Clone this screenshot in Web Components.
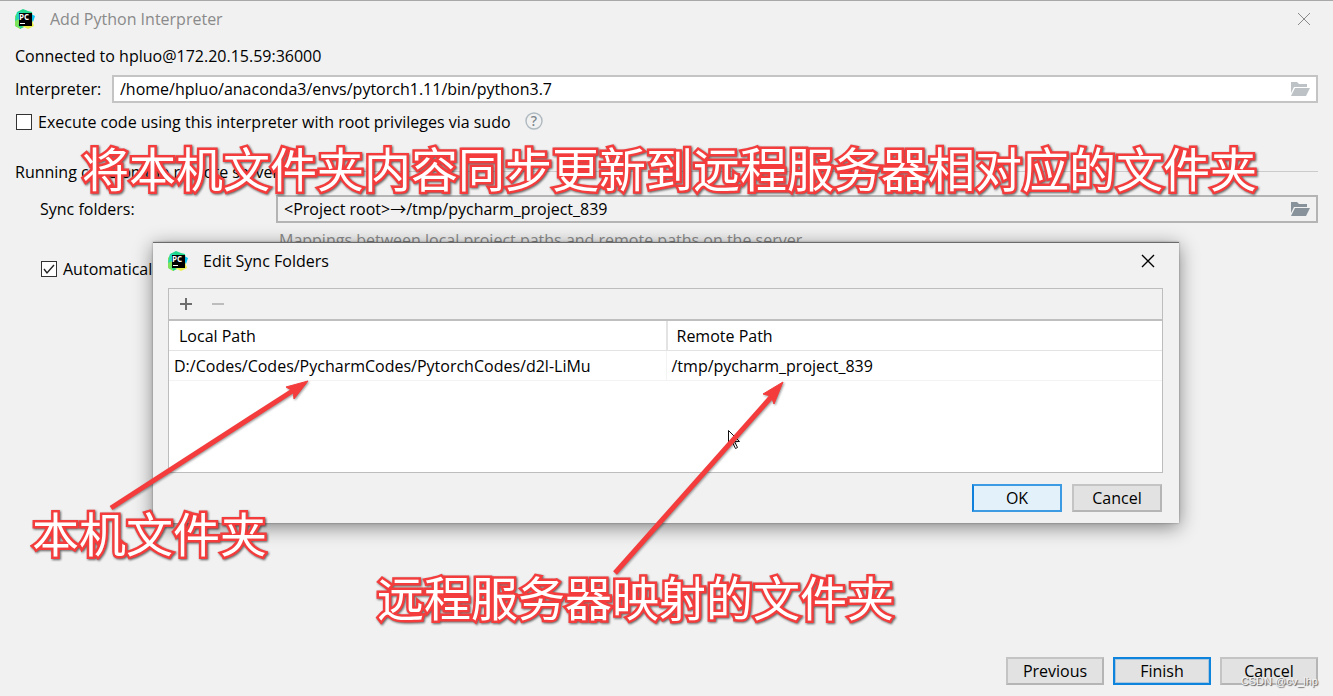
<!DOCTYPE html>
<html lang="en">
<head>
<meta charset="utf-8">
<title>Add Python Interpreter</title>
<style>
html, body { height: 100%; margin: 0; }
body { font: 16px/24px "Open Sans", "Noto Sans CJK SC", sans-serif; color: #000; background: #f1f1f1; overflow: hidden; }
</style>
</head>
<body>
<interpreter-page></interpreter-page>
<script>
function define(name, html, ready) {
  const template = document.createElement('template');
  template.innerHTML = html;
  customElements.define(name, class extends HTMLElement {
    connectedCallback() {
      if (this.shadowRoot) return;
      this.attachShadow({ mode: 'open' }).append(template.content.cloneNode(true));
      if (ready) ready(this, this.shadowRoot);
    }
  });
}

define('pycharm-logo', `
<style>:host { display: block; width: 20px; height: 20px; } svg { display: block; } text { font: 700 8px "Open Sans", sans-serif; }</style>
<svg width="20" height="20" viewBox="0 0 20 20" aria-hidden="true">
  <path d="M2 3 8 0l5 2 4 1 1 8-8 4-9 3z" fill="#21d789"/>
  <path d="M0 7 3 3l3 9 2 5-3 3-5-3z" fill="#7ee35a"/>
  <path d="M2 3h6L4 10 0 12z" fill="#25d9b0"/>
  <path d="M16 5l4 2-2 6-4-2z" fill="#07c3f2"/>
  <path d="M4 15l13-4 2 6-6 3-4-2-5 2z" fill="#e9f04a"/>
  <path d="M3 15l4 2 2 1-4 2z" fill="#21d789"/>
  <rect x="4" y="4" width="13" height="13" fill="#000"/>
  <text x="4" y="11" fill="#fff">PC</text>
  <path d="M5 14h5v1H5z" fill="#fff"/>
</svg>`);

define('title-bar', `
<style>
:host { display: flex; align-items: center; height: 36px; padding: 0 22px 0 15px; gap: 15px; }
:host([strong]) { padding-right: 24px; }
h1 { flex: 1; margin: 0; font: inherit; }
button { border: 0; padding: 0; background: none; color: inherit; width: 14px; height: 14px; }
svg { display: block; }
</style>
<pycharm-logo></pycharm-logo><h1><slot></slot></h1>
<button type="button" aria-label="Close"><svg width="14" height="14" viewBox="0 0 14 14" fill="none" stroke="currentColor"><path d="M1 1l12 12M13 1L1 13"/></svg></button>`,
(host, root) => {
  if (host.hasAttribute('strong')) root.querySelector('svg').setAttribute('stroke-width', '1.4');
});

define('push-button', `
<style>
:host { display: block; width: 98px; height: 28px; }
button { box-sizing: border-box; width: 100%; height: 100%; padding: 0; border: 2px solid #b5b5b5; border-top-color: #c4c4c4; border-left-color: #c4c4c4; background: #e2e2e2; font: inherit; line-height: 22px; color: #000; }
:host([primary]) button { border-color: #0f84dd; box-shadow: inset 0 0 0 1px #abc7de; }
:host([hot]) button { border-color: #3d9be3; border-left-color: #0f80dc; background: #e3f1fa; }
</style>
<button type="button"><slot></slot></button>`);

define('path-field', `
<style>
:host { display: flex; flex: 1; box-sizing: border-box; height: 28px; border: 2px solid #c4c4c4; background: #fff; color: #bcc2c6; align-items: center; padding-right: 6px; }
:host([dark]) { background: #f1f1f1; border-color: #b4b4b4; color: #87929a; }
input { flex: 1; min-width: 0; height: 24px; box-sizing: border-box; border: 0; outline: 0; padding: 0 6px; background: none; font: inherit; color: #000; }
button { border: 0; padding: 0; background: none; color: inherit; width: 20px; height: 16px; }
svg { display: block; }
</style>
<input id="path" type="text" spellcheck="false">
<button type="button" aria-label="Browse"><svg width="20" height="16" viewBox="0 0 20 16" fill="currentColor"><path d="M1 1h6l2 2h8v3H4L1 12z"/><path d="M5 7h15l-4 8H1z"/></svg></button>`,
(host, root) => {
  const input = root.querySelector('input');
  input.value = host.getAttribute('value');
  input.setAttribute('aria-label', host.getAttribute('label'));
});

define('check-option', `
<style>
:host { display: flex; align-items: center; }
label { display: flex; align-items: center; gap: 6px; white-space: nowrap; }
input { appearance: none; margin: 0; width: 16px; height: 16px; box-sizing: border-box; border: 1px solid #333; background: #fff; }
input:checked { background: #fff url("data:image/svg+xml,%3Csvg xmlns='http://www.w3.org/2000/svg' viewBox='0 0 14 14'%3E%3Cpath d='M2 7l3 4 7-8' fill='none' stroke='%23222' stroke-width='1.4'/%3E%3C/svg%3E"); }
</style>
<label><input type="checkbox"><slot></slot></label>`,
(host, root) => { root.querySelector('input').checked = host.hasAttribute('checked'); });

define('note-text', `
<style>
:host { position: absolute; font: 400 47px/60px "Noto Sans CJK SC", sans-serif; color: #fff; white-space: nowrap; -webkit-text-stroke: 5px #f43c3c; paint-order: stroke fill; stroke-linejoin: round; filter: drop-shadow(1px 1px 1px #0009); }
</style><slot></slot>`);

define('note-arrows', `
<style>:host { position: absolute; left: 0; top: 0; margin-top: -1px; pointer-events: none; } svg { display: block; }</style>
<svg width="900" height="600" viewBox="0 0 900 600" aria-hidden="true">
  <path d="M728.500 430.500v16l4-4 3 6 2-1-3-6h5z" fill="#fff" stroke="#111"/>
  <g fill="#f43c3c" stroke="#f43c3c" filter="drop-shadow(1px 1px 1px #0006)">
    <path d="M111 508L294 390M615 573L773 395" stroke-width="5"/>
    <path d="M308 381l-22 6 7 4 1 8z"/><path d="M783 382l-20 12 8 2 3 8z"/>
  </g>
</svg>`);

define('sync-table', `
<style>
:host { display: flex; flex-direction: column; border: 1px solid #bdbdbd; background: #fff; }
.tools { display: flex; align-items: center; gap: 18px; height: 30px; padding: 0 10px; background: #f1f1f1; border-bottom: 2px solid #bfbfbf; }
.tools button { border: 0; padding: 0; width: 14px; height: 14px; background: none; }
svg { display: block; }
table { width: 100%; border-collapse: separate; border-spacing: 0; table-layout: fixed; }
th, td { box-sizing: border-box; height: 30px; padding: 0 0 0 5px; text-align: left; font-weight: 400; line-height: 24px; border-bottom: 1px solid #f3f3f3; }
th { padding: 0 10px; border-bottom-color: #e3e3e3; }
th + th { border-left: 2px solid #e3e3e3; padding-left: 9px; }
td + td { border-left: 1px solid #f3f3f3; }
.space { height: 91px; }
</style>
<div class="tools">
  <button type="button" aria-label="Add"><svg width="14" height="14"><path d="M7 1v12M1 7h12" stroke="#6e6e6e" stroke-width="2"/></svg></button>
  <button type="button" aria-label="Remove"><svg width="14" height="14"><path d="M1 7h12" stroke="#bdbdbd" stroke-width="2"/></svg></button>
</div>
<table>
  <thead><tr><th scope="col">Local Path</th><th scope="col">Remote Path</th></tr></thead>
  <tbody><tr><td>D:/Codes/Codes/PycharmCodes/PytorchCodes/d2l-LiMu</td><td>/tmp/pycharm_project_839</td></tr></tbody>
</table>
<div class="space"></div>`);

define('sync-dialog', `
<style>
:host { position: absolute; left: 153px; right: 154px; top: 241px; background: #f1f1f1; border-top: 1px solid #6b6b6b; box-shadow: 0 4px 18px #0007, 0 0 2px #0005; }
sync-table { margin: 9px 16px 0 15px; }
footer { display: flex; justify-content: flex-end; gap: 10px; padding: 11px 17px 11px; }
push-button { width: 90px; }
</style>
<title-bar strong>Edit Sync Folders</title-bar>
<sync-table></sync-table>
<footer><push-button hot>OK</push-button><push-button>Cancel</push-button></footer>`);

define('interpreter-page', `
<style>
:host { position: relative; display: flex; flex-direction: column; box-sizing: border-box; min-height: 100%; border-top: 1px solid #a8a8a8; overflow: hidden; }
.title { color: #8a8a8a; }
.line { display: flex; align-items: center; padding: 0 15px; }
.connected { height: 38px; }
.path { height: 28px; }
.path label { width: 97px; }
.execute { height: 38px; gap: 14px; padding-left: 16px; }
.help { width: 18px; height: 18px; border: 0; padding: 0; background: none; }
.help svg { display: block; overflow: visible; }
.help text { font: 500 14px "Noto Sans", sans-serif; }
.section { height: 24px; padding-top: 19px; padding-bottom: 11px; gap: 6px; }
.section h2 { margin: 0; font: inherit; }
.section hr { flex: 1; margin: 0 0 2px; border: 0; border-top: 1px solid #cbcbcb; }
.sync { padding-left: 40px; }
.sync label { width: 236px; }
.hint { padding: 5px 0 5px 279px; color: #8a8a8a; }
.auto { padding-left: 41px; }
.actions { display: flex; justify-content: flex-end; gap: 9px; margin-top: auto; padding: 0 15px 11px; }
.credit { position: absolute; right: 15px; bottom: 7px; font: 11px/16px "Liberation Sans", sans-serif; color: #f5f5f5; text-shadow: 1px 1px 1px #555; }
.server { left: 82px; top: 136px; }
.local { left: 32px; top: 501px; }
.remote { left: 377px; top: 565px; }
</style>
<title-bar class="title">Add Python Interpreter</title-bar>
<div class="line connected">Connected to hpluo@172.20.15.59:36000</div>
<div class="line path"><label>Interpreter:</label><path-field label="Interpreter" value="/home/hpluo/anaconda3/envs/pytorch1.11/bin/python3.7"></path-field></div>
<div class="line execute"><check-option>Execute code using this interpreter with root privileges via sudo</check-option>
<button class="help" type="button" aria-label="Help"><svg width="18" height="18"><circle cx="9" cy="8" r="8" fill="none" stroke="#aeb9c0" stroke-width="1.4"/><text x="9" y="13" text-anchor="middle" fill="#7c858b">?</text></svg></button></div>
<div class="line section"><h2>Running code on the remote server</h2><hr></div>
<div class="line sync"><label>Sync folders:</label><path-field dark label="Sync folders" value="&lt;Project root&gt;→/tmp/pycharm_project_839"></path-field></div>
<div class="hint">Mappings between local project paths and remote paths on the server</div>
<check-option class="auto" checked>Automatically</check-option>
<div class="actions"><push-button>Previous</push-button><push-button primary>Finish</push-button><push-button>Cancel</push-button></div>
<sync-dialog></sync-dialog>
<note-arrows></note-arrows>
<note-text class="server">将本机文件夹内容同步更新到远程服务器相对应的文件夹</note-text>
<note-text class="local">本机文件夹</note-text>
<note-text class="remote">远程服务器映射的文件夹</note-text>
<div class="credit">CSDN @cv_lhp</div>`,
(host, root) => {
  for (const label of root.querySelectorAll('.path label, .sync label')) {
    label.addEventListener('click', () => label.nextElementSibling.shadowRoot.querySelector('input').focus());
  }
});
</script>
</body>
</html>
